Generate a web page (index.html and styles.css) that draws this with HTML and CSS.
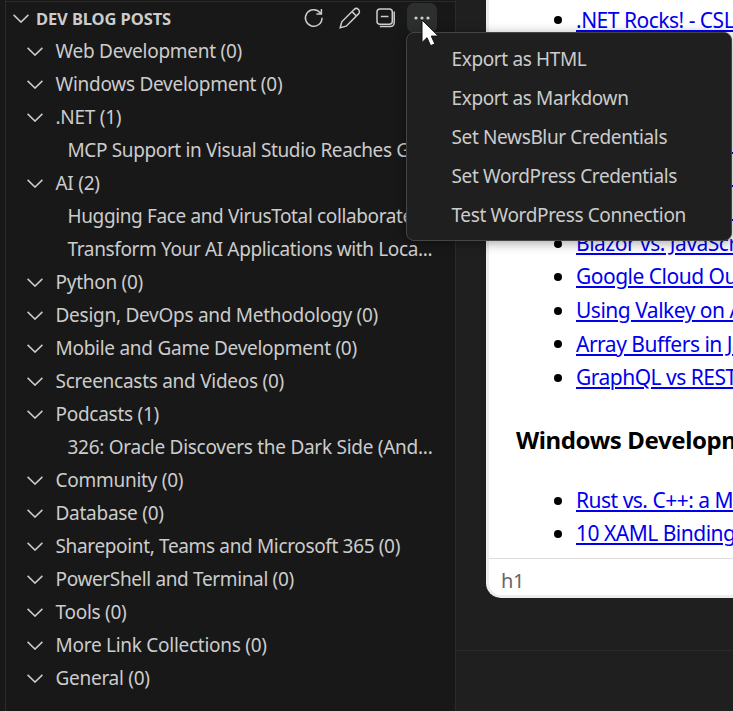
FILE: index.html
```html
<!DOCTYPE html>
<html lang="en">
<head>
<meta charset="utf-8">
<title>Dev Blog Posts</title>
<link rel="stylesheet" href="styles.css">
</head>
<body>
<svg class="defs" width="0" height="0"><symbol id="chev" viewBox="0 0 16 9"><path d="M.6.9 8 8.1 15.4.9" fill="none" stroke="currentColor" stroke-width="1.5"/></symbol></svg>
<div class="app">
  <aside class="sidebar">
    <header class="head">
      <svg class="chev"><use href="#chev"/></svg>
      <h2>DEV BLOG POSTS</h2>
      <div class="actions">
        <span class="btn"><svg width="22" height="22" viewBox="0 0 22 22"><path d="M19 10.7A8.3 8.3 0 1 1 17.2 5.8L18 6.8M18.4 2v5h-5" /></svg></span>
        <span class="btn"><svg width="24" height="24" viewBox="0 0 24 24"><path d="M2.2 21.8 3.8 15.8 16.1 3.5a3 3 0 0 1 4.4 4.4L8.2 20.2ZM14 5.6l4.4 4.4"/></svg></span>
        <span class="btn"><svg width="22" height="22" viewBox="0 0 22 22"><rect x="2" y="2" width="15.3" height="15.3" rx="3"/><path d="M5.8 9.6h7.7M19.2 4.5v11.2a3.8 3.8 0 0 1-3.8 3.8H4.8"/></svg></span>
        <span class="btn active"><svg width="18" height="6" viewBox="0 0 18 6"><g fill="#ccc" stroke="none"><circle cx="3" cy="3" r="1.6"/><circle cx="9" cy="3" r="1.6"/><circle cx="15" cy="3" r="1.6"/></g></svg></span>
      </div>
    </header>
    <div class="tree">
      <div class="row"><svg class="chev"><use href="#chev"/></svg><span>Web Development (0)</span></div>
      <div class="row"><svg class="chev"><use href="#chev"/></svg><span>Windows Development (0)</span></div>
      <div class="row"><svg class="chev"><use href="#chev"/></svg><span>.NET (1)</span></div>
      <div class="row leaf"><span>MCP Support in Visual Studio Reaches G...</span></div>
      <div class="row"><svg class="chev"><use href="#chev"/></svg><span>AI (2)</span></div>
      <div class="row leaf"><span>Hugging Face and VirusTotal collaborate...</span></div>
      <div class="row leaf"><span>Transform Your AI Applications with Loca...</span></div>
      <div class="row"><svg class="chev"><use href="#chev"/></svg><span>Python (0)</span></div>
      <div class="row"><svg class="chev"><use href="#chev"/></svg><span>Design, DevOps and Methodology (0)</span></div>
      <div class="row"><svg class="chev"><use href="#chev"/></svg><span>Mobile and Game Development (0)</span></div>
      <div class="row"><svg class="chev"><use href="#chev"/></svg><span>Screencasts and Videos (0)</span></div>
      <div class="row"><svg class="chev"><use href="#chev"/></svg><span>Podcasts (1)</span></div>
      <div class="row leaf wide"><span>326: Oracle Discovers the Dark Side (And...</span></div>
      <div class="row"><svg class="chev"><use href="#chev"/></svg><span>Community (0)</span></div>
      <div class="row"><svg class="chev"><use href="#chev"/></svg><span>Database (0)</span></div>
      <div class="row tight"><svg class="chev"><use href="#chev"/></svg><span>Sharepoint, Teams and Microsoft 365 (0)</span></div>
      <div class="row tight"><svg class="chev"><use href="#chev"/></svg><span>PowerShell and Terminal (0)</span></div>
      <div class="row"><svg class="chev"><use href="#chev"/></svg><span>Tools (0)</span></div>
      <div class="row"><svg class="chev"><use href="#chev"/></svg><span>More Link Collections (0)</span></div>
      <div class="row"><svg class="chev"><use href="#chev"/></svg><span>General (0)</span></div>
    </div>
  </aside>
  <main class="main">
    <section class="editor">
      <article class="doc">
        <ul><li><a>.NET Rocks! - CSLA</a></li></ul>
        <h3></h3>
        <ul>
          <li><a class="covered"></a></li>
          <li><a class="covered"></a></li>
          <li><a class="covered"></a></li>
          <li><a>Blazor vs. JavaScript</a></li>
          <li><a>Google Cloud Outage</a></li>
          <li><a>Using Valkey on AWS</a></li>
          <li><a>Array Buffers in JavaScript</a></li>
          <li><a>GraphQL vs REST API</a></li>
        </ul>
        <h3>Windows Development</h3>
        <ul>
          <li><a>Rust vs. C++: a Modern</a></li>
          <li><a>10 XAML Binding Tips</a></li>
        </ul>
      </article>
      <footer class="path">h1</footer>
    </section>
    <div class="panel"></div>
  </main>
</div>
<nav class="menu">
  <div><span>Export as HTML</span></div>
  <div><span>Export as Markdown</span></div>
  <div><span>Set NewsBlur Credentials</span></div>
  <div><span>Set WordPress Credentials</span></div>
  <div><span>Test WordPress Connection</span></div>
</nav>
<svg class="cursor" width="19" height="28" viewBox="0 0 19 28"><path d="M1 1v22.5l5-4.8 3.6 8 4.2-1.8-3.5-7.8h7Z" fill="#fff" stroke="#111" stroke-width="1"/></svg>
</body>
</html>
```
FILE: styles.css
```css
* { box-sizing: border-box; }
body {
  margin: 0;
  width: 733px;
  height: 711px;
  overflow: hidden;
  background: #181818;
  color: #ccc;
  font-family: "Noto Sans", "Open Sans", sans-serif;
  font-size: 19px;
  letter-spacing: -.27px;
}
.defs { display: block; }
.app { display: flex; height: 711px; padding-left: 5px; }
.sidebar {
  width: 451px;
  flex: none;
  border-left: 1px solid #2b2b2b;
  border-right: 1px solid #2b2b2b;
  padding-top: 1px;
}
.head {
  height: 33px;
  border-top: 1px solid #2b2b2b;
  padding: 0 18px 0 7px;
  display: flex;
  align-items: center;
}
.head h2 { margin: 0 0 0 7px; font-size: 16.5px; font-weight: 700; letter-spacing: -.1px; white-space: nowrap; }
.chev { width: 16px; height: 9px; flex: none; }
.actions { margin-left: auto; display: flex; gap: 6px; }
.btn { width: 30px; height: 30px; border-radius: 7px; display: flex; align-items: center; justify-content: center; }
.btn svg { fill: none; stroke: #ccc; stroke-width: 1.5; }
.btn.active { background: #2d2f2f; }
.tree { padding-top: 1px; }
.row {
  height: 33px;
  line-height: 33px;
  padding-left: 20.5px;
  display: flex;
  align-items: center;
  gap: 13px;
  white-space: nowrap;
  overflow: hidden;
}
.leaf { padding-left: 61.5px; letter-spacing: -.37px; }
.wide { letter-spacing: -.27px; }
.tight { letter-spacing: -.35px; }
.main { flex: 1; min-width: 0; background: #1f1f1f; display: flex; flex-direction: column; }
.editor {
  margin-left: 30px;
  height: 598px;
  border: 3px solid #eee;
  border-width: 0 0 3px 3px;
  border-radius: 0 0 0 15px;
  background: #fff;
  overflow: hidden;
  color: #000;
  display: flex;
  flex-direction: column;
}
.doc { height: 558px; flex: none; padding: 3.5px 0 0 27px; font-size: 21px; letter-spacing: -.5px; overflow: hidden; white-space: nowrap; }
.doc ul { margin: 0; padding: 0; list-style: none; }
.doc li { height: 33.6px; line-height: 33.6px; display: flex; align-items: center; }
.doc li::before { content: ""; width: 8px; height: 8px; border-radius: 50%; background: #000; margin: 0 14px 0 38px; flex: none; }
.doc a { color: #0000ee; text-decoration: underline; text-decoration-thickness: 2px; text-underline-offset: 2px; }
.doc .covered { width: 170px; height: 22px; border-bottom: 2px solid #0000ee; }
.doc h3 { margin: 0; height: 89px; line-height: 89px; font-size: 24px; font-weight: 700; letter-spacing: -.4px; }
.path { height: 37px; flex: none; border-top: 1px solid #ddd; padding-left: 12px; font-size: 20px; line-height: 43px; color: #666; }
.panel { margin-top: 52px; flex: 1; border-top: 1px solid #2b2b2b; }
.menu {
  position: absolute;
  left: 406px;
  top: 32px;
  width: 326px;
  height: 209px;
  padding: 7px 0 0 44.5px;
  border: 1px solid #454545;
  border-radius: 8px;
  background: #1f1f1f;
  box-shadow: 0 2px 12px rgba(0,0,0,.36);
  white-space: nowrap;
  letter-spacing: -.36px;
}
.menu div { height: 39px; line-height: 39px; }
.cursor { position: absolute; left: 421px; top: 19px; }
```
